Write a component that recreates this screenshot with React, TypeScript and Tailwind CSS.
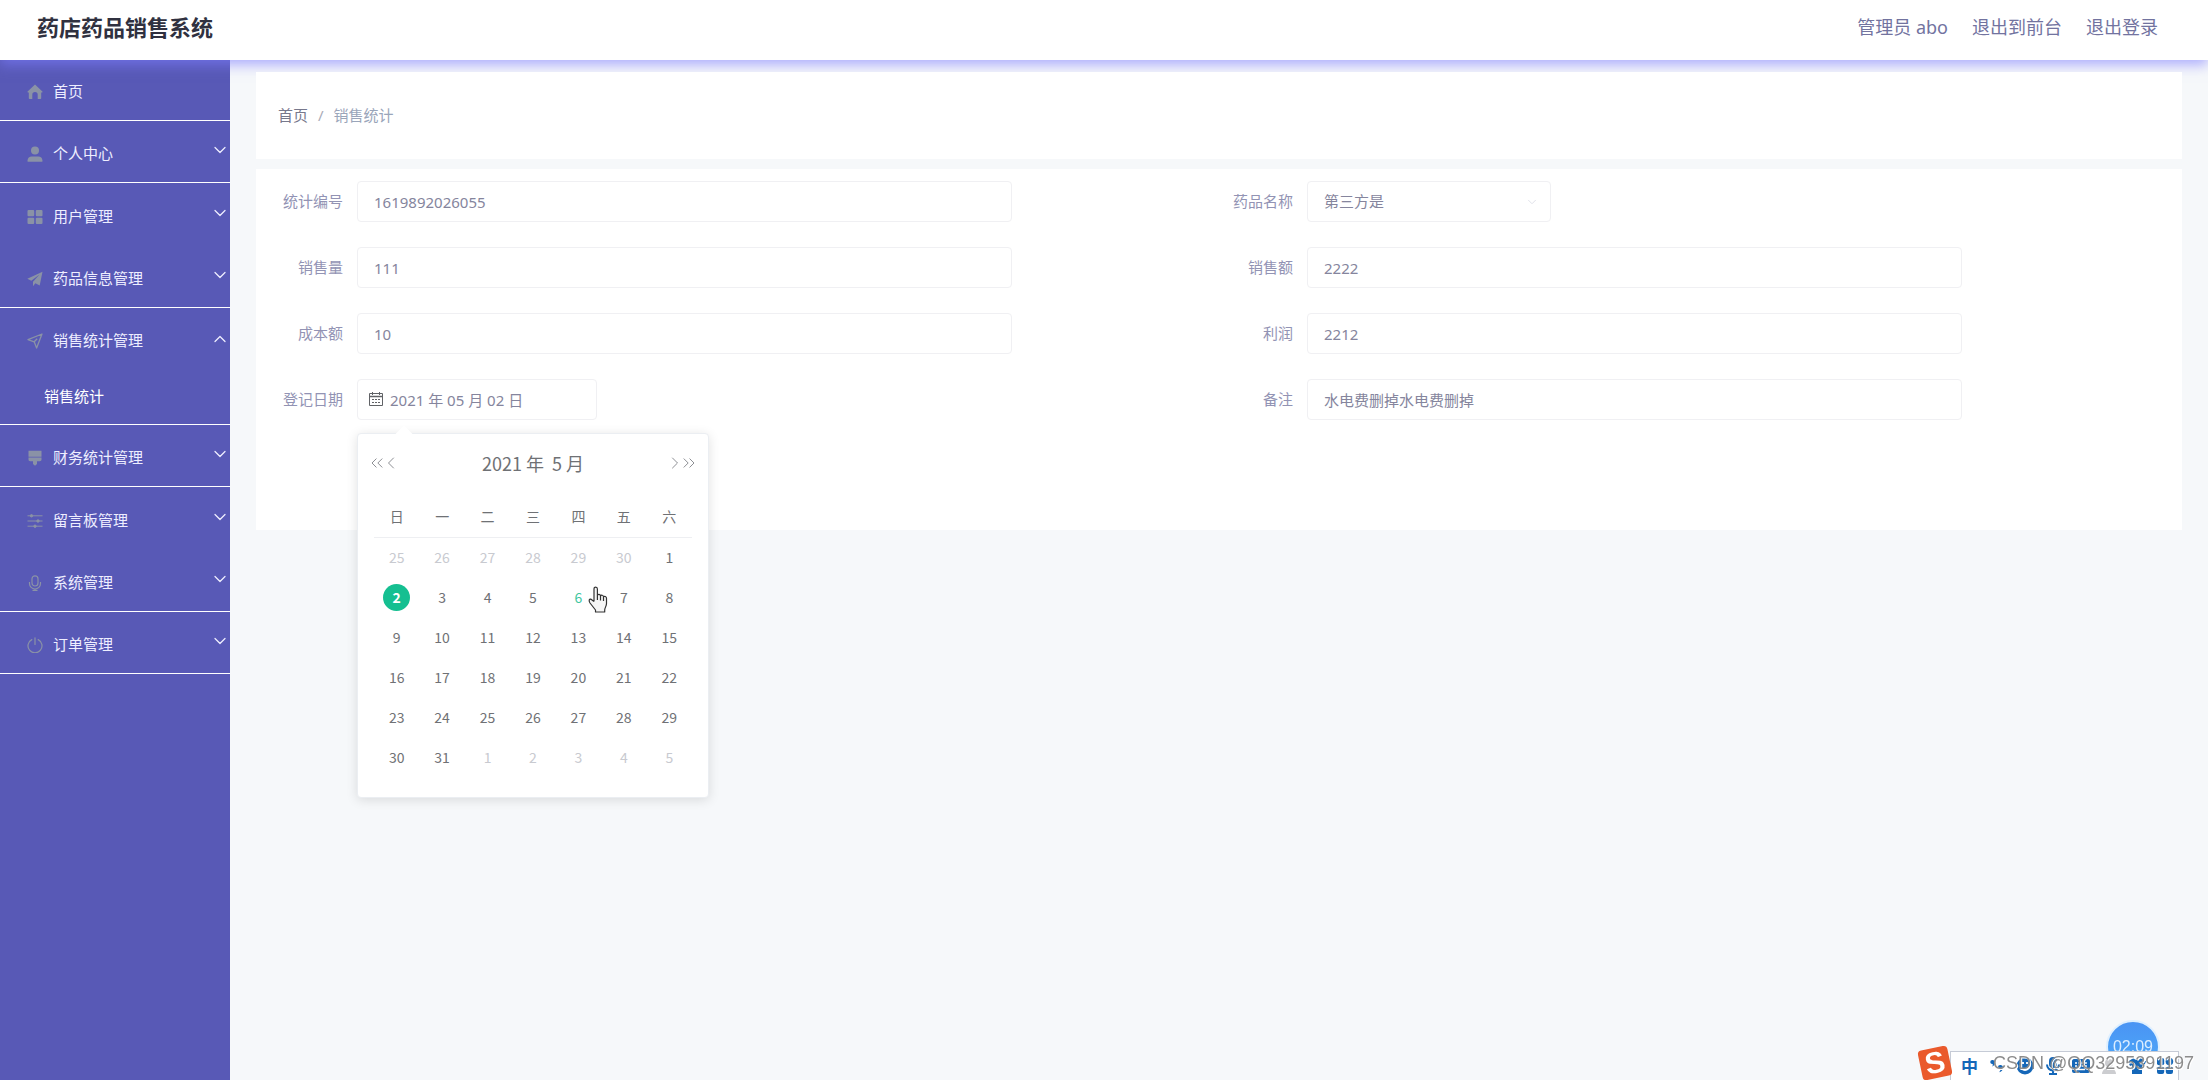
import { useState, type ReactNode } from "react"
import { ChevronDown, ChevronLeft, ChevronRight, ChevronUp, ChevronsLeft, ChevronsRight } from "lucide-react"
import clsx from "clsx"

const icons: Record<string, ReactNode> = {
  home: <path fill="currentColor" d="M8 1.500.6 8.600c-.4.5-.1.9.4.9h.8v5.700c0 .5.3.8.8.8h2.700v-4.300a2.700 2.700 0 0 1 5.400 0V16h2.700c.5 0 .8-.3.8-.8V9.500h.8c.5 0 .8-.4.4-.9z" />,
  user: (
    <g fill="currentColor">
      <circle cx="8" cy="4.500" r="4" />
      <path d="M.6 15.800v-1.600c0-2.300 1.800-3.800 4-3.800h6.800c2.200 0 4 1.500 4 3.800v1.600z" />
    </g>
  ),
  grid: (
    <g fill="currentColor">
      <rect x=".5" y="1" width="6.700" height="6.200" rx="1" />
      <rect x="8.800" y="1" width="6.700" height="6.200" rx="1" />
      <rect x=".5" y="8.800" width="6.700" height="6.200" rx="1" />
      <rect x="8.800" y="8.800" width="6.700" height="6.200" rx="1" />
    </g>
  ),
  promotion: <path fill="currentColor" d="M15.500.8.3 7.700l4 2L12.500 3.500 6 10.700v4.500l2.400-2.900 4.300 2.100z" />,
  position: <path fill="none" stroke="currentColor" strokeWidth="1.300" strokeLinejoin="round" d="M15 1 1 6.600l6.200 2.200L9.600 15zM7.200 8.800l3-3" />,
  brush: <path fill="currentColor" d="M1.500.8h13v6h-13zM1.500 7.500h13v2c0 1-.7 1.700-1.700 1.700H10V14l-2 1.800L6 14v-2.800H3.200c-1 0-1.700-.7-1.700-1.700z" />,
  operation: (
    <g stroke="currentColor" fill="currentColor">
      <path d="M.5 2.800h15M.5 8h15M.5 13.200h15" />
      <circle cx="4.500" cy="2.800" r="1.200" />
      <circle cx="11" cy="8" r="1.200" />
      <circle cx="8" cy="13.200" r="1.200" />
    </g>
  ),
  mic: (
    <g fill="none" stroke="currentColor" strokeWidth="1.200">
      <rect x="5" y=".8" width="6" height="10.200" rx="3" />
      <path d="M2.500 7v1.500a5.500 5.500 0 0 0 11 0V7M8 14v1.500M5.500 15.400h5" />
    </g>
  ),
  power: <path fill="none" stroke="currentColor" strokeWidth="1.200" strokeLinecap="round" d="M8 .8v6.700M4.800 2.600a7 7 0 1 0 6.400 0" />,
}

const menu = [
  { name: "个人中心", icon: "user", line: true },
  { name: "用户管理", icon: "grid", line: false },
  { name: "药品信息管理", icon: "promotion", line: true },
  { name: "销售统计管理", icon: "position", line: true, children: ["销售统计"] },
  { name: "财务统计管理", icon: "brush", line: true },
  { name: "留言板管理", icon: "operation", line: false },
  { name: "系统管理", icon: "mic", line: true },
  { name: "订单管理", icon: "power", line: true },
]

const weekDays = ["日", "一", "二", "三", "四", "五", "六"]

// 2021-04-25 is the first cell of the May 2021 grid
const weeks = Array.from({ length: 6 }, (_, w) =>
  Array.from({ length: 7 }, (_, d) => {
    const n = w * 7 + d - 5
    if (n < 1) return { day: n + 30, current: false }
    if (n > 31) return { day: n - 31, current: false }
    return { day: n, current: true }
  }),
)

function MenuIcon({ name }: { name: string }) {
  return (
    <svg viewBox="0 0 16 16" className="size-4 shrink-0 text-[#8a92a6]">
      {icons[name]}
    </svg>
  )
}

function Sidebar() {
  return (
    <nav className="w-[230px] shrink-0 bg-[#5859b6] text-[15px] text-[#eef]">
      <a href="#home" className="flex h-[61px] items-center gap-[10px] border-b border-white pt-0.5 pl-[27px]">
        <MenuIcon name="home" />
        首页
      </a>
      {menu.map((item) => (
        <div key={item.name} className={clsx(item.line && "border-b border-white")}>
          <button
            className={clsx(
              "flex w-full items-center gap-[10px] pt-1 pl-[27px] text-left",
              item.line ? "h-[61px]" : "h-[63px]",
            )}
          >
            <MenuIcon name={item.icon} />
            <span className="flex-1">{item.name}</span>
            {item.children ? (
              <ChevronUp className="mb-1 size-5" strokeWidth={1.5} />
            ) : (
              <ChevronDown className="mb-2 size-5" strokeWidth={1.5} />
            )}
          </button>
          {item.children?.map((child) => (
            <a key={child} href="#stat" className="flex h-[55px] items-center pl-11 text-white">
              {child}
            </a>
          ))}
        </div>
      ))}
    </nav>
  )
}

const fieldBox = "h-[41px] rounded border border-[#f0f0f3] bg-white text-[15px] text-[#85859d] outline-none"

function Field({ id, label, children }: { id: string; label: string; children: ReactNode }) {
  return (
    <div className="flex items-center">
      <label htmlFor={id} className="w-[88px] shrink-0 pr-3.5 text-right text-[15px] text-[#9293b4]">
        {label}
      </label>
      <div className="relative flex-1">{children}</div>
    </div>
  )
}

function TextField({ id, label, value }: { id: string; label: string; value: string }) {
  return (
    <Field id={id} label={label}>
      <input id={id} defaultValue={value} className={clsx(fieldBox, "block w-[76%] px-4")} />
    </Field>
  )
}

function CalendarIcon() {
  return (
    <svg viewBox="0 0 14 14" className="absolute top-[13px] left-3 size-[14px] text-[#606266]" fill="none" stroke="currentColor">
      <path d="M.5 1.500h13v12H.5z" />
      <path d="M.5 4.500h13" strokeWidth="1.500" />
      <path d="M3.500 0v3M10.500 0v3" />
      <path d="M3 7.500h8M3 10.500h8" strokeDasharray="2 1" />
    </svg>
  )
}

function DatePanel() {
  const [selected, setSelected] = useState(2)
  const hovered = 6

  return (
    <div className="absolute top-[54px] left-0 z-30 w-[352px] rounded border border-[#ebeef2] bg-white px-4 pb-5 font-['Noto_Sans_CJK_SC',sans-serif] text-[#6f7175] shadow-[0_2px_12px_rgba(0,0,0,0.12)]">
      <span className="absolute -top-1.5 left-10 size-3 rotate-45 bg-white" />
      <div className="-mx-[7px] flex h-[58px] items-center justify-between text-[#8d8f94]">
        <div className="flex">
          <button aria-label="上一年"><ChevronsLeft className="size-5" strokeWidth={1.2} /></button>
          <button aria-label="上个月" className="-ml-1.5"><ChevronLeft className="size-5" strokeWidth={1.2} /></button>
        </div>
        <div className="flex gap-2 text-[18px] text-[#6f7175]">
          <span>2021 年</span>
          <span>5 月</span>
        </div>
        <div className="flex">
          <button aria-label="下个月" className="-mr-1.5"><ChevronRight className="size-5" strokeWidth={1.2} /></button>
          <button aria-label="下一年"><ChevronsRight className="size-5" strokeWidth={1.2} /></button>
        </div>
      </div>
      <table className="w-full table-fixed border-collapse text-center text-[14px]">
        <thead>
          <tr className="h-[45px] border-b border-[#eeeff2]">
            {weekDays.map((d) => (
              <th key={d} className="pt-1 font-normal">{d}</th>
            ))}
          </tr>
        </thead>
        <tbody>
          {weeks.map((week, i) => (
            <tr key={i} className="h-10">
              {week.map(({ day, current }) => (
                <td key={day} className="p-0">
                  <button
                    onClick={() => current && setSelected(day)}
                    className={clsx(
                      "size-[27px] rounded-full leading-none",
                      !current && "text-[#c8cad0]",
                      current && day === selected && "bg-[#15bf91] font-bold text-white",
                      current && day === hovered && day !== selected && "text-[#3fc6a0]",
                    )}
                  >
                    {day}
                  </button>
                </td>
              ))}
            </tr>
          ))}
        </tbody>
      </table>
      <svg viewBox="0 0 20 28" className="absolute top-[152px] left-[230px] h-7 w-5">
        <path
          fill="#f6f6f6"
          stroke="#333"
          strokeWidth="1.200"
          strokeLinejoin="round"
          d="M6 15.500V3c0-2.600 3.400-2.600 3.400 0v6.500c.3-1.600 3-1.500 3.100.5.700-1.300 2.900-1 3 .8 1-1 3-.4 3 1.400v5.300c0 2.500-1.800 4.500-1.800 6.500v2H7.500v-2L2 17c-1.600-2.500-.8-4.200 1-3.800L6 15.500M9.400 9.500V14M12.500 10v4.500M15.500 11v4"
        />
      </svg>
    </div>
  )
}

function ImeBar() {
  return (
    <div className="fixed right-0 bottom-0 z-40 h-[60px] w-[300px]">
      <div className="absolute top-0 right-[48px] flex size-[54px] items-center justify-center rounded-full border-2 border-[#dff0ff] bg-linear-to-b from-[#4a94f4] to-[#4daaf8] font-['Liberation_Sans',sans-serif] text-[16px] text-[#dceeff]">
        02:09
      </div>
      <div className="absolute right-[29px] bottom-0 flex h-[29px] w-[229px] items-center justify-end gap-[10px] border border-b-0 border-[#c6cbd6] bg-white pr-1 text-[#1567b8]">
        <span className="font-['Noto_Sans_CJK_SC',sans-serif] text-[17px] leading-6 font-bold">中</span>
        <svg viewBox="0 0 18 18" className="size-[18px]" fill="currentColor">
          <path d="M4 3a2.500 2.500 0 0 1 3 2.500C7 8 5.500 9 4 9.500c1-1.200 1-2 .5-2.500A2 2 0 0 1 4 3M12 8a2.500 2.500 0 0 1 3 2.500c0 3-1.500 4-4 4.800 1.500-1.300 1.500-2.500 1-3.300A2 2 0 0 1 12 8" />
        </svg>
        <svg viewBox="0 0 18 18" className="size-[18px]">
          <circle cx="9" cy="9" r="8.500" fill="currentColor" />
          <path d="M4.500 8.500a4.500 4.500 0 0 0 9 0M7 5v2M11 5v2" stroke="#fff" strokeWidth="1.800" fill="none" />
        </svg>
        <svg viewBox="0 0 18 18" className="size-[18px]" fill="none" stroke="currentColor" strokeWidth="2">
          <rect x="6" y="1" width="6" height="9" rx="3" fill="currentColor" />
          <path d="M3 7.500a6 6 0 0 0 12 0M9 14v3M5 17h8" />
        </svg>
        <svg viewBox="0 0 18 18" className="size-[18px]">
          <rect y="2" width="18" height="14" rx="2" fill="currentColor" />
          <path d="M3 6h12M3 9h12" stroke="#fff" strokeWidth="1.500" strokeDasharray="2 1.300" />
          <path d="M5 12.500h8" stroke="#fff" strokeWidth="1.500" />
        </svg>
        <svg viewBox="0 0 18 18" className="size-[18px] text-[#cccdd0]" fill="currentColor">
          <circle cx="9" cy="6" r="4" />
          <path d="M2 17c0-8 14-8 14 0z" />
        </svg>
        <svg viewBox="0 0 18 18" className="size-[18px]" fill="currentColor">
          <path d="M5.500 1C7 3.500 11 3.500 12.500 1L18 4.500 16 9l-2-.8V17H4V8.200L2 9 0 4.500z" />
        </svg>
        <svg viewBox="0 0 18 18" className="size-[18px]" fill="currentColor">
          <rect x="1" y="1" width="7.200" height="7.200" rx="2" />
          <rect x="1" y="9.800" width="7.200" height="7.200" rx="2" />
          <rect x="9.800" y="9.800" width="7.200" height="7.200" rx="2" />
          <circle cx="13.400" cy="4.600" r="3.800" />
        </svg>
      </div>
      <div className="absolute bottom-0.5 left-3 flex size-[30px] -rotate-12 items-center justify-center rounded bg-[#ea5a2c] font-['Liberation_Sans',sans-serif] text-[30px] leading-[30px] font-bold text-white">
        S
      </div>
      <div className="absolute right-[14px] bottom-[7px] font-['Liberation_Sans',sans-serif] text-[18px] leading-5 whitespace-nowrap text-[#8c8c8c] [text-shadow:1px_1px_0_#fff]">
        CSDN @QQ3295391197
      </div>
    </div>
  )
}

export default function App() {
  return (
    <div className="flex min-h-screen flex-col bg-[#f6f8fa] font-['Noto_Sans','Noto_Sans_CJK_SC',sans-serif]">
      <header className="relative z-10 flex h-[60px] items-center justify-between bg-white pr-[50px] pb-1.5 pl-[37px] shadow-[0_5px_12px_rgba(125,125,255,0.6)]">
        <h1 className="text-[22px] font-bold text-[#303140]">药店药品销售系统</h1>
        <div className="flex gap-6 text-[18px] text-[#72739f]">
          <span>管理员 abo</span>
          <a href="#front">退出到前台</a>
          <a href="#logout">退出登录</a>
        </div>
      </header>

      <div className="flex flex-1">
        <Sidebar />
        <main className="min-w-0 flex-1 px-[26px] pt-3">
          <div className="relative z-20 flex h-[87px] items-center gap-[10px] bg-white px-[22px] text-[15px]">
            <a href="#home" className="text-[#77788c]">首页</a>
            <span className="text-[#a9abb8]">/</span>
            <span className="text-[#9aa5ba]">销售统计</span>
          </div>

          <form className="relative z-20 mt-[10px] grid grid-cols-2 gap-y-[25px] bg-white px-[13px] pt-3 pb-[110px]">
            <TextField id="code" label="统计编号" value="1619892026055" />
            <Field id="medicine" label="药品名称">
              <div className="relative w-[244px]">
                <select id="medicine" className={clsx(fieldBox, "block w-full appearance-none px-4")}>
                  <option>第三方是</option>
                </select>
                <ChevronDown className="pointer-events-none absolute top-3.5 right-3 size-[14px] text-[#dcdde6]" strokeWidth={1.5} />
              </div>
            </Field>
            <TextField id="count" label="销售量" value="111" />
            <TextField id="amount" label="销售额" value="2222" />
            <TextField id="cost" label="成本额" value="10" />
            <TextField id="profit" label="利润" value="2212" />
            <Field id="date" label="登记日期">
              <input id="date" defaultValue="2021 年 05 月 02 日" className={clsx(fieldBox, "block w-[240px] pr-4 pl-8")} />
              <CalendarIcon />
              <DatePanel />
            </Field>
            <TextField id="remark" label="备注" value="水电费删掉水电费删掉" />
          </form>
        </main>
      </div>

      <ImeBar />
    </div>
  )
}
